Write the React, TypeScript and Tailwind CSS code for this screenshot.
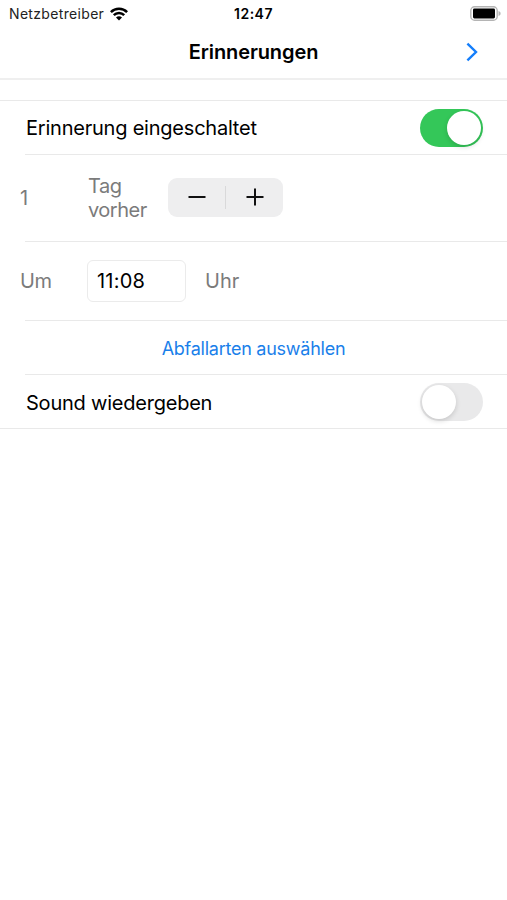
import { useState } from "react";

function WifiIcon() {
  return (
    <svg width="18" height="14" viewBox="0 0 18 14" fill="none" stroke="#000" strokeWidth="2.5">
      <path d="M0.9 5.1C5.4 0.6 12.6 0.6 17.1 5.1" />
      <path d="M3.8 8.2C6.7 5.3 11.3 5.3 14.2 8.2" />
      <path d="M9 13.6L6 10.4C7.7 8.8 10.3 8.8 12 10.4Z" fill="#000" stroke="none" />
    </svg>
  );
}

function BatteryIcon() {
  return (
    <svg width="31" height="15" viewBox="0 0 31 15" fill="none">
      <rect x="0.8" y="0.8" width="26.4" height="13.4" rx="3.8" stroke="#b4b4b4" strokeWidth="1.4" />
      <rect x="3" y="2.6" width="22" height="9.8" rx="1.4" fill="#000" />
      <path d="M28.5 5C30 5.6 30.6 6.5 30.6 7.5S30 9.4 28.5 10Z" fill="#b4b4b4" />
    </svg>
  );
}

interface SwitchProps {
  label: string;
  on: boolean;
  onToggle: () => void;
}

function Switch({ label, on, onToggle }: SwitchProps) {
  return (
    <button
      role="switch"
      aria-checked={on}
      aria-label={label}
      onClick={onToggle}
      className={`flex h-[38px] w-[63px] shrink-0 items-center rounded-full p-[2px] ${
        on ? "justify-end bg-[#34c759]" : "justify-start bg-[#e9e9ea]"
      }`}
    >
      <span className="size-[34px] rounded-full bg-white shadow-[0_2px_5px_rgba(0,0,0,0.15)]" />
    </button>
  );
}

export default function App() {
  const [enabled, setEnabled] = useState(true);
  const [sound, setSound] = useState(false);
  const [days, setDays] = useState(1);
  const [time, setTime] = useState("11:08");

  return (
    <div className="flex h-[900px] w-[507px] flex-col overflow-hidden bg-white font-['Inter',sans-serif] text-black">
      {/* Status bar */}
      <div className="grid h-[27px] shrink-0 grid-cols-3 items-center pl-[9px] pr-[6px] text-[14px]">
        <div className="flex items-center gap-[6px] text-[#222]">
          <span className="tracking-[0.33px]">Netzbetreiber</span>
          <WifiIcon />
        </div>
        <span className="pr-[3px] text-center font-semibold tracking-[0.5px]">12:47</span>
        <div className="flex justify-end">
          <BatteryIcon />
        </div>
      </div>

      {/* Navigation bar */}
      <header className="grid h-[53px] shrink-0 grid-cols-[60px_1fr_60px] items-center border-b-2 border-[#efefef] pb-px">
        <span />
        <h1 className="text-center text-[20px] font-semibold tracking-[-0.1px]">Erinnerungen</h1>
        <button aria-label="Weiter" className="flex justify-end pr-[29px]">
          <svg width="12" height="20" viewBox="0 0 12 20" fill="none" stroke="#147efb" strokeWidth="2.4">
            <path d="M1.4 1.6L10 10L1.4 18.4" />
          </svg>
        </button>
      </header>

      <main className="mt-5 border-y border-[#e9e9e9]">
        <div className="flex h-[53px] items-center justify-between pl-[26px] pr-6">
          <span className="text-[20px] tracking-[-0.22px]">Erinnerung eingeschaltet</span>
          <Switch label="Erinnerung eingeschaltet" on={enabled} onToggle={() => setEnabled(!enabled)} />
        </div>

        <div className="ml-[25px] border-t border-[#e9e9e9]" />
        <div className="flex h-[86px] items-center pl-5 text-[20px] text-[#7b7b7b]">
          <span className="w-[68px]">{days}</span>
          <span className="w-20 leading-[24px] tracking-[-0.5px]">Tag vorher</span>
          <div className="mb-0.5 flex h-[39px] w-[115px] items-center rounded-[9px] bg-[#eeeeef]">
            <button
              aria-label="Weniger"
              onClick={() => setDays(Math.max(1, days - 1))}
              className="flex h-full flex-1 items-center justify-center"
            >
              <svg width="18" height="18" viewBox="0 0 18 18" stroke="#111" strokeWidth="2">
                <path d="M0.5 9H17.5" />
              </svg>
            </button>
            <span className="h-[23px] w-px bg-[#d9d9da]" />
            <button
              aria-label="Mehr"
              onClick={() => setDays(days + 1)}
              className="flex h-full flex-1 items-center justify-center"
            >
              <svg width="18" height="18" viewBox="0 0 18 18" stroke="#111" strokeWidth="2">
                <path d="M0.5 9H17.5M9 0.5V17.5" />
              </svg>
            </button>
          </div>
        </div>

        <div className="ml-[25px] border-t border-[#e9e9e9]" />
        <div className="flex h-[78px] items-center pl-5 text-[20px] text-[#7b7b7b]">
          <span className="w-[67px] tracking-[-0.3px]">Um</span>
          <input
            aria-label="Uhrzeit"
            value={time}
            onChange={(e) => setTime(e.target.value)}
            className="mr-[19px] h-[42px] w-[99px] rounded-[6px] border border-[#ebebeb] px-[9px] tracking-[0.2px] text-black outline-none"
          />
          <span>Uhr</span>
        </div>

        <div className="ml-[25px] border-t border-[#e9e9e9]" />
        <button className="flex h-[53px] w-full items-center justify-center pt-0.5 text-[18px] tracking-[-0.25px] text-[#1a7fea]">
          Abfallarten auswählen
        </button>

        <div className="ml-[25px] border-t border-[#e9e9e9]" />
        <div className="flex h-[53px] items-center justify-between pl-[26px] pr-6">
          <span className="pt-0.5 text-[20px] tracking-[-0.22px]">Sound wiedergeben</span>
          <Switch label="Sound wiedergeben" on={sound} onToggle={() => setSound(!sound)} />
        </div>
      </main>
    </div>
  );
}
